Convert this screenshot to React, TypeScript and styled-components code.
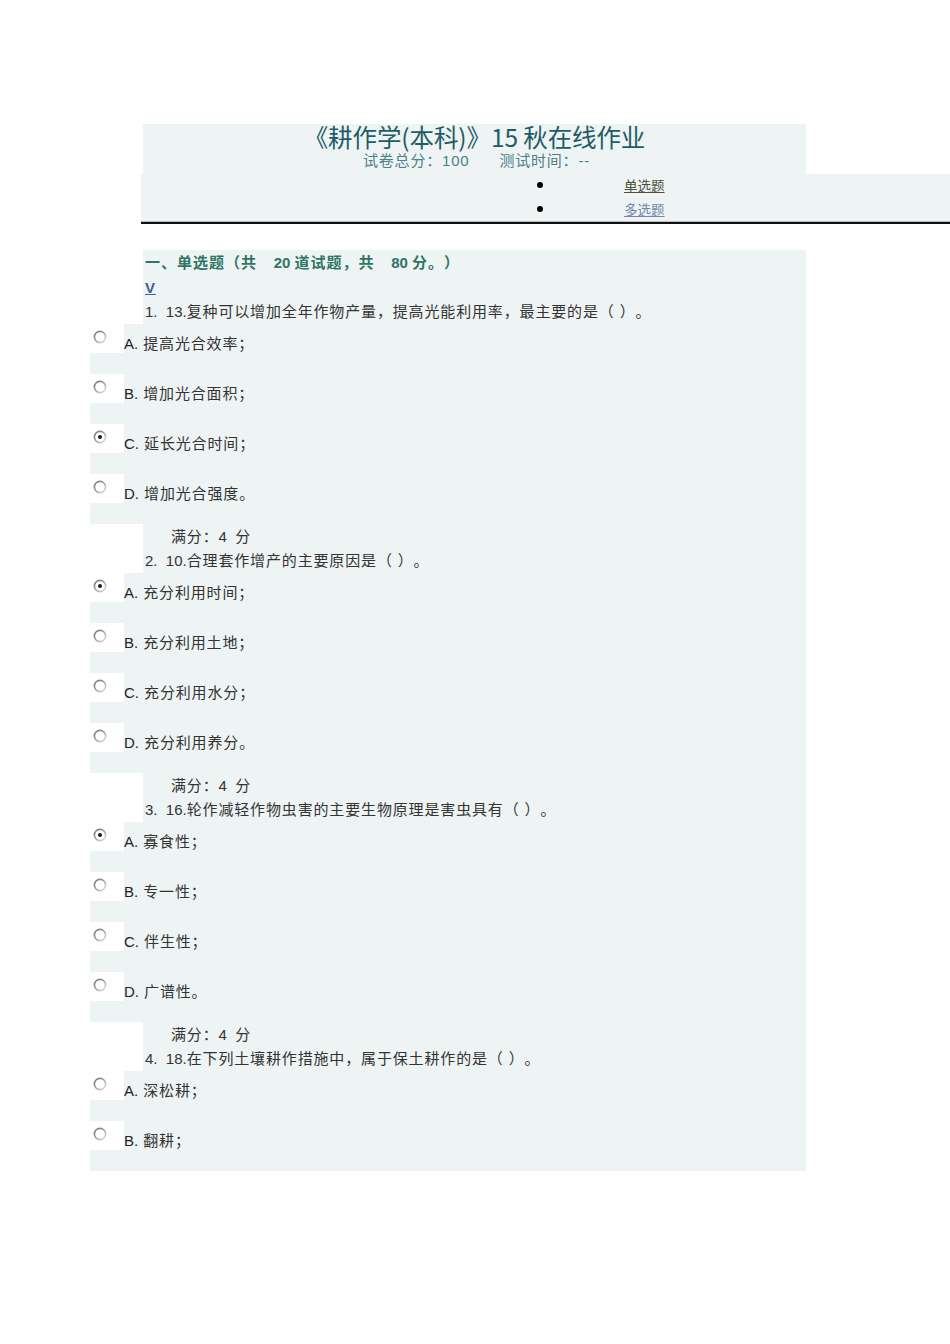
import React from "react";
import styled, { createGlobalStyle } from "styled-components";

const Global = createGlobalStyle`
  html, body { margin: 0; padding: 0; background: #ffffff; }
  body {
    font-family: "Liberation Sans", "Noto Sans CJK SC", sans-serif;
    color: #333;
    text-spacing-trim: space-all;
  }
`;

const BG = "#eef4f4";

const Page = styled.div`
  width: 950px;
  padding-top: 124px;
  padding-bottom: 170px;
`;

const HeaderBox = styled.div`
  margin-left: 143px;
  width: 663px;
  height: 50px;
  background: ${BG};
  text-align: center;
`;

const Title = styled.h1`
  margin: 0;
  font-family: "Noto Sans CJK SC", "Liberation Sans", sans-serif;
  font-weight: 400;
  font-size: 24.5px;
  line-height: 26px;
  color: #1f5d66;
  letter-spacing: -0.1px;
`;

const Subtitle = styled.div`
  font-size: 15px;
  line-height: 22px;
  color: #4f7f86;
  padding-left: 4px;
  letter-spacing: 0.8px;
  & span + span { margin-left: 30px; }
`;

const Nav = styled.ul`
  list-style: none;
  margin: 0 0 0 141px;
  padding: 0 0 0 396px;
  height: 48px;
  background: ${BG};
  border-bottom: 2px solid #111;
  box-shadow: 0 -1px 0 #b8bcbc inset;
  box-sizing: content-box;
`;

const NavItem = styled.li`
  display: flex;
  align-items: center;
  height: 24px;
  padding-bottom: 2px;
  box-sizing: border-box;
  &::before {
    content: "";
    width: 6px;
    height: 6px;
    border-radius: 50%;
    background: #000;
    margin-right: 81px;
  }
`;

const NavLink = styled.a<{ $visited?: boolean }>`
  font-family: "Noto Sans CJK SC", serif;
  font-size: 13.5px;
  color: ${(p) => (p.$visited ? "#7386a8" : "#4f5039")};
  text-decoration: underline;
  cursor: pointer;
`;

const Section = styled.div`
  margin-top: 26px;
  width: 716px;
  margin-left: 90px;
`;

const TextRow = styled.div<{ $indent?: number }>`
  margin-left: 53px;
  height: 24.5px;
  line-height: 25.5px;
  background: ${BG};
  padding-left: ${(p) => p.$indent ?? 2}px;
  font-size: 15px;
  letter-spacing: 0.85px;
  white-space: pre;
`;

const Num = styled.span`
  letter-spacing: 0;
`;

const SectionTitle = styled(TextRow)`
  font-weight: 700;
  color: #2f7563;
  letter-spacing: 1px;
`;

const VLink = styled.a`
  font-weight: 700;
  color: #3d5f8f;
  text-decoration: underline;
  font-size: 15px;
`;

const QText = styled(TextRow)`
  color: #333;
`;

const OptionRow = styled.div`
  display: grid;
  grid-template-columns: 34px 1fr;
  grid-template-rows: 29px 21px;
  background: ${BG};
`;

const RadioCell = styled.div`
  grid-column: 1;
  grid-row: 1;
  background: #ffffff;
  padding: 6px 0 0 3px;
  box-sizing: border-box;
`;

const OptionLabel = styled.div`
  grid-column: 2;
  grid-row: 1 / 3;
  padding-top: 10px;
  line-height: 20px;
  font-size: 15px;
  letter-spacing: 0.85px;
  color: #333;
  white-space: nowrap;
  & b { font-weight: 400; color: #222; letter-spacing: 0; }
`;

const Radio: React.FC<{ checked?: boolean; id: string }> = ({ checked, id }) => (
  <svg width="14" height="14" viewBox="0 0 14 14">
    <defs>
      <linearGradient id={id} x1="0" y1="0" x2="1" y2="1">
        <stop offset="0" stopColor="#6e6e6e" />
        <stop offset="0.55" stopColor="#a8a8a8" />
        <stop offset="1" stopColor="#e6e6e6" />
      </linearGradient>
    </defs>
    <circle cx="7" cy="7" r="5.6" fill="#fff" stroke={`url(#${id})`} strokeWidth="1.6" />
    {checked && <circle cx="7" cy="7" r="2" fill="#1a1a1a" />}
  </svg>
);

type Q = { num: string; text: string; options: string[]; checked: number };

const questions: Q[] = [
  {
    num: "1.  13.",
    text: "复种可以增加全年作物产量，提高光能利用率，最主要的是（ ）。",
    options: ["提高光合效率；", "增加光合面积；", "延长光合时间；", "增加光合强度。"],
    checked: 2,
  },
  {
    num: "2.  10.",
    text: "合理套作增产的主要原因是（ ）。",
    options: ["充分利用时间；", "充分利用土地；", "充分利用水分；", "充分利用养分。"],
    checked: 0,
  },
  {
    num: "3.  16.",
    text: "轮作减轻作物虫害的主要生物原理是害虫具有（ ）。",
    options: ["寡食性；", "专一性；", "伴生性；", "广谱性。"],
    checked: 0,
  },
  {
    num: "4.  18.",
    text: "在下列土壤耕作措施中，属于保土耕作的是（ ）。",
    options: ["深松耕；", "翻耕；"],
    checked: -1,
  },
];

const letters = ["A", "B", "C", "D"];

export default function App() {
  return (
    <Page>
      <Global />
      <HeaderBox>
        <Title>《耕作学(本科)》15 秋在线作业</Title>
        <Subtitle>
          <span>试卷总分：100</span>
          <span>测试时间：--</span>
        </Subtitle>
      </HeaderBox>
      <Nav>
        <NavItem>
          <NavLink>单选题</NavLink>
        </NavItem>
        <NavItem>
          <NavLink $visited>多选题</NavLink>
        </NavItem>
      </Nav>
      <Section>
        <SectionTitle>
          一、单选题（共<Num>    20 </Num>道试题，共<Num>    80 </Num>分。）
        </SectionTitle>
        <TextRow>
          <VLink>V</VLink>
        </TextRow>
        {questions.map((q, qi) => (
          <React.Fragment key={qi}>
            {qi > 0 && (
              <TextRow $indent={28}>
                满分：<Num>4  </Num>分
              </TextRow>
            )}
            <QText>
              <Num>{q.num}</Num>
              {q.text}
            </QText>
            {q.options.map((o, oi) => (
              <OptionRow key={oi}>
                <RadioCell>
                  <Radio id={`g${qi}${oi}`} checked={q.checked === oi} />
                </RadioCell>
                <OptionLabel>
                  <b>{letters[oi]}.</b> {o}
                </OptionLabel>
              </OptionRow>
            ))}
          </React.Fragment>
        ))}
      </Section>
    </Page>
  );
}
